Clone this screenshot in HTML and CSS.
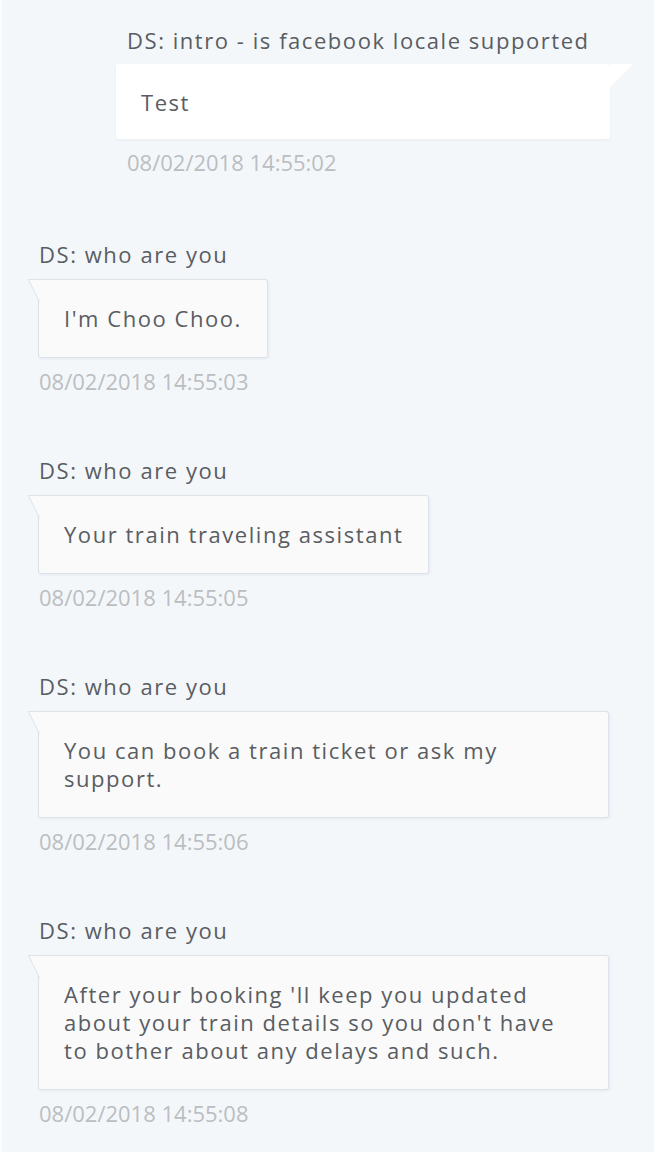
FILE: index.html
```html
<!DOCTYPE html>
<html lang="en">
<head>
<meta charset="utf-8">
<title>Conversation</title>
<link rel="stylesheet" href="styles.css">
</head>
<body>
<div class="page">
  <div class="msg msg-out">
    <div class="label">DS: intro - is facebook locale supported</div>
    <div class="bubble bubble-out">
      <svg class="tail-out" width="23" height="23" viewBox="0 0 23 23"><polygon points="0,0 23,0 0,23" fill="#ffffff"/></svg>
      Test
    </div>
    <div class="time">08/02/2018 14:55:02</div>
  </div>

  <div class="msg msg-in">
    <div class="label">DS: who are you</div>
    <div class="bubble bubble-in">
      <svg class="tail-in" width="12" height="24" viewBox="0 0 12 24"><polygon points="0.5,0.5 12,0.5 12,23.5" fill="#fafafa"/><polyline points="12,0.5 0.5,0.5 11.5,23" fill="none" stroke="#dde3ea" stroke-width="1"/></svg>
      I'm Choo Choo.
    </div>
    <div class="time">08/02/2018 14:55:03</div>
  </div>

  <div class="msg msg-in">
    <div class="label">DS: who are you</div>
    <div class="bubble bubble-in">
      <svg class="tail-in" width="12" height="24" viewBox="0 0 12 24"><polygon points="0.5,0.5 12,0.5 12,23.5" fill="#fafafa"/><polyline points="12,0.5 0.5,0.5 11.5,23" fill="none" stroke="#dde3ea" stroke-width="1"/></svg>
      Your train traveling assistant
    </div>
    <div class="time">08/02/2018 14:55:05</div>
  </div>

  <div class="msg msg-in">
    <div class="label">DS: who are you</div>
    <div class="bubble bubble-in">
      <svg class="tail-in" width="12" height="24" viewBox="0 0 12 24"><polygon points="0.5,0.5 12,0.5 12,23.5" fill="#fafafa"/><polyline points="12,0.5 0.5,0.5 11.5,23" fill="none" stroke="#dde3ea" stroke-width="1"/></svg>
      You can book a train ticket or ask my support.
    </div>
    <div class="time">08/02/2018 14:55:06</div>
  </div>

  <div class="msg msg-in">
    <div class="label">DS: who are you</div>
    <div class="bubble bubble-in">
      <svg class="tail-in" width="12" height="24" viewBox="0 0 12 24"><polygon points="0.5,0.5 12,0.5 12,23.5" fill="#fafafa"/><polyline points="12,0.5 0.5,0.5 11.5,23" fill="none" stroke="#dde3ea" stroke-width="1"/></svg>
      After your booking 'll keep you updated about your train details so you don't have to bother about any delays and such.
    </div>
    <div class="time">08/02/2018 14:55:08</div>
  </div>
</div>
</body>
</html>
```

FILE: styles.css
```css
html, body {
  margin: 0;
  padding: 0;
  background: #f4f7fa;
}

body {
  font-family: "Open Sans", "Noto Sans", sans-serif;
  font-size: 22px;
  color: #595d62;
}

.page {
  min-height: 1152px;
  box-sizing: border-box;
  border-left: 2px solid #fbfcfd;
  padding: 26px 0 0 36px;
  display: flex;
  flex-direction: column;
  gap: 61px;
}

.msg {
  display: flex;
  flex-direction: column;
  align-items: flex-start;
}

.msg-out {
  margin-left: 78px;
  margin-bottom: 3px;
  width: 494px;
}

.label {
  line-height: 28px;
  letter-spacing: 1.55px;
  padding-left: 1px;
  color: #595d62;
}

.msg-out .label,
.msg-out .time {
  padding-left: 11px;
}

.time {
  line-height: 28px;
  color: #bbbec1;
  padding-left: 1px;
}

.bubble {
  position: relative;
  line-height: 28px;
  letter-spacing: 1.55px;
  color: #595d62;
  border-radius: 3px;
  box-sizing: border-box;
}

.bubble-out {
  align-self: stretch;
  background: #ffffff;
  margin: 10px 0 9px;
  padding: 24px 25px 23px;
  box-shadow: 0 1px 3px rgba(40, 60, 90, 0.06);
}

.bubble-in {
  max-width: 571px;
  background: #fafafa;
  border: 1px solid #dde3ea;
  margin: 11px 0 9px;
  padding: 24px 25px 25px;
  box-shadow: 1px 1px 3px rgba(40, 60, 90, 0.07);
}

.tail-out {
  position: absolute;
  top: 0;
  right: -23px;
  display: block;
}

.tail-in {
  position: absolute;
  top: -1px;
  left: -11px;
  display: block;
}
```
